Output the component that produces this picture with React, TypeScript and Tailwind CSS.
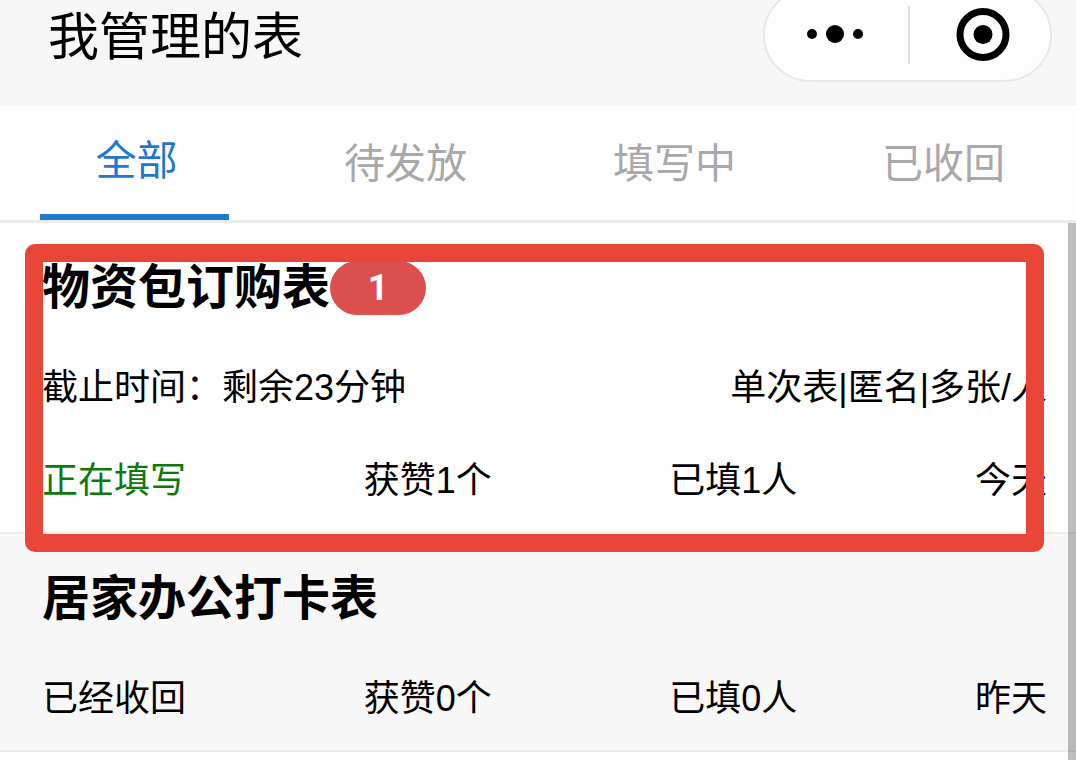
import { useState } from "react";
import clsx from "clsx";

type Sheet = {
  id: number;
  title: string;
  unread?: number;
  deadline?: string;
  kind?: string;
  status: string;
  active?: boolean;
  likes: number;
  filled: number;
  day: string;
  highlighted?: boolean;
};

const TABS = ["全部", "待发放", "填写中", "已收回"];

const SHEETS: Sheet[] = [
  {
    id: 1,
    title: "物资包订购表",
    unread: 1,
    deadline: "剩余23分钟",
    kind: "单次表|匿名|多张/人",
    status: "正在填写",
    active: true,
    likes: 1,
    filled: 1,
    day: "今天",
    highlighted: true,
  },
  { id: 2, title: "居家办公打卡表", status: "已经收回", likes: 0, filled: 0, day: "昨天" },
];

function Capsule() {
  return (
    <div className="-mt-3 grid h-[94px] w-[289px] grid-cols-2 rounded-full border-2 border-[#e8e8e8] bg-[#fdfdfd]">
      <button type="button" aria-label="更多" className="grid place-items-center">
        <svg width="58" height="20" viewBox="0 0 58 20">
          <circle cx="5" cy="9" r="5" />
          <circle cx="28" cy="9" r="9" />
          <circle cx="51" cy="9" r="5" />
        </svg>
      </button>
      <button type="button" aria-label="关闭" className="flex items-center">
        <span className="h-[58px] w-0.5 bg-[#dddddd]" />
        <svg className="ml-[46px]" width="54" height="54" viewBox="0 0 54 54">
          <circle cx="27" cy="26.5" r="23" fill="none" stroke="#000" strokeWidth="7" />
          <circle cx="27" cy="26.5" r="9.5" />
        </svg>
      </button>
    </div>
  );
}

function SheetItem({ sheet }: { sheet: Sheet }) {
  return (
    <li
      className={clsx(
        "relative flex flex-col gap-[35px] border-b-2 border-[#ececec] pt-[29px] pr-[29px] pb-[22px] pl-[42px]",
        sheet.highlighted ? "z-10 bg-[#fefefe]" : "bg-[#f7f7f7]",
      )}
    >
      <div className="flex items-center">
        <h2 className="text-[48px] leading-[72px] font-bold">{sheet.title}</h2>
        {sheet.unread && (
          <span className="grid h-[54px] w-24 place-items-center rounded-full bg-[#db4f4c] font-[Roboto,sans-serif] text-[36px] leading-[50px] font-bold text-white">
            {sheet.unread}
          </span>
        )}
      </div>

      {sheet.deadline && (
        <div className="flex justify-between">
          <span>截止时间：{sheet.deadline}</span>
          <span>{sheet.kind}</span>
        </div>
      )}

      <div className="flex justify-between">
        <span className={clsx(sheet.active && "text-[#0b7a0b]")}>{sheet.status}</span>
        <span>获赞{sheet.likes}个</span>
        <span>已填{sheet.filled}人</span>
        <span>{sheet.day}</span>
      </div>

      {/* ── Red frame over the highlighted sheet ── */}
      {sheet.highlighted && (
        <div className="pointer-events-none absolute top-[21px] right-8 -bottom-5 left-[25px] rounded-[10px] border-[18px] border-[#e94538]" />
      )}
    </li>
  );
}

export default function App() {
  const [tab, setTab] = useState(TABS[0]);

  return (
    <div className="flex min-h-screen flex-col bg-[#fefefe] font-['Liberation_Sans','Noto_Sans_CJK_SC',sans-serif] text-black">
      <header className="flex h-[106px] items-start justify-between overflow-hidden bg-[#f7f7f7] pr-6 pl-12">
        <h1 className="text-[51px] leading-[76px]">我管理的表</h1>
        <Capsule />
      </header>

      <nav role="tablist" className="grid h-[117px] grid-cols-4 border-b-[3px] border-[#ececec]">
        {TABS.map((t) => (
          <button
            key={t}
            type="button"
            role="tab"
            aria-selected={t === tab}
            onClick={() => setTab(t)}
            className={clsx(
              "w-[70%] justify-self-center pt-1 pl-1 text-[41px] whitespace-nowrap",
              t === tab ? "border-b-[6px] border-[#1f78cb] text-[#1f78cb]" : "text-[#a8a8a8]",
            )}
          >
            {t}
          </button>
        ))}
      </nav>

      <main className="relative flex-1">
        <ul className="text-[36px] leading-[58px]">
          {SHEETS.map((s) => (
            <SheetItem key={s.id} sheet={s} />
          ))}
        </ul>
        <div className="absolute inset-y-0 right-0 z-20 w-2 bg-black/25" />
      </main>
    </div>
  );
}
